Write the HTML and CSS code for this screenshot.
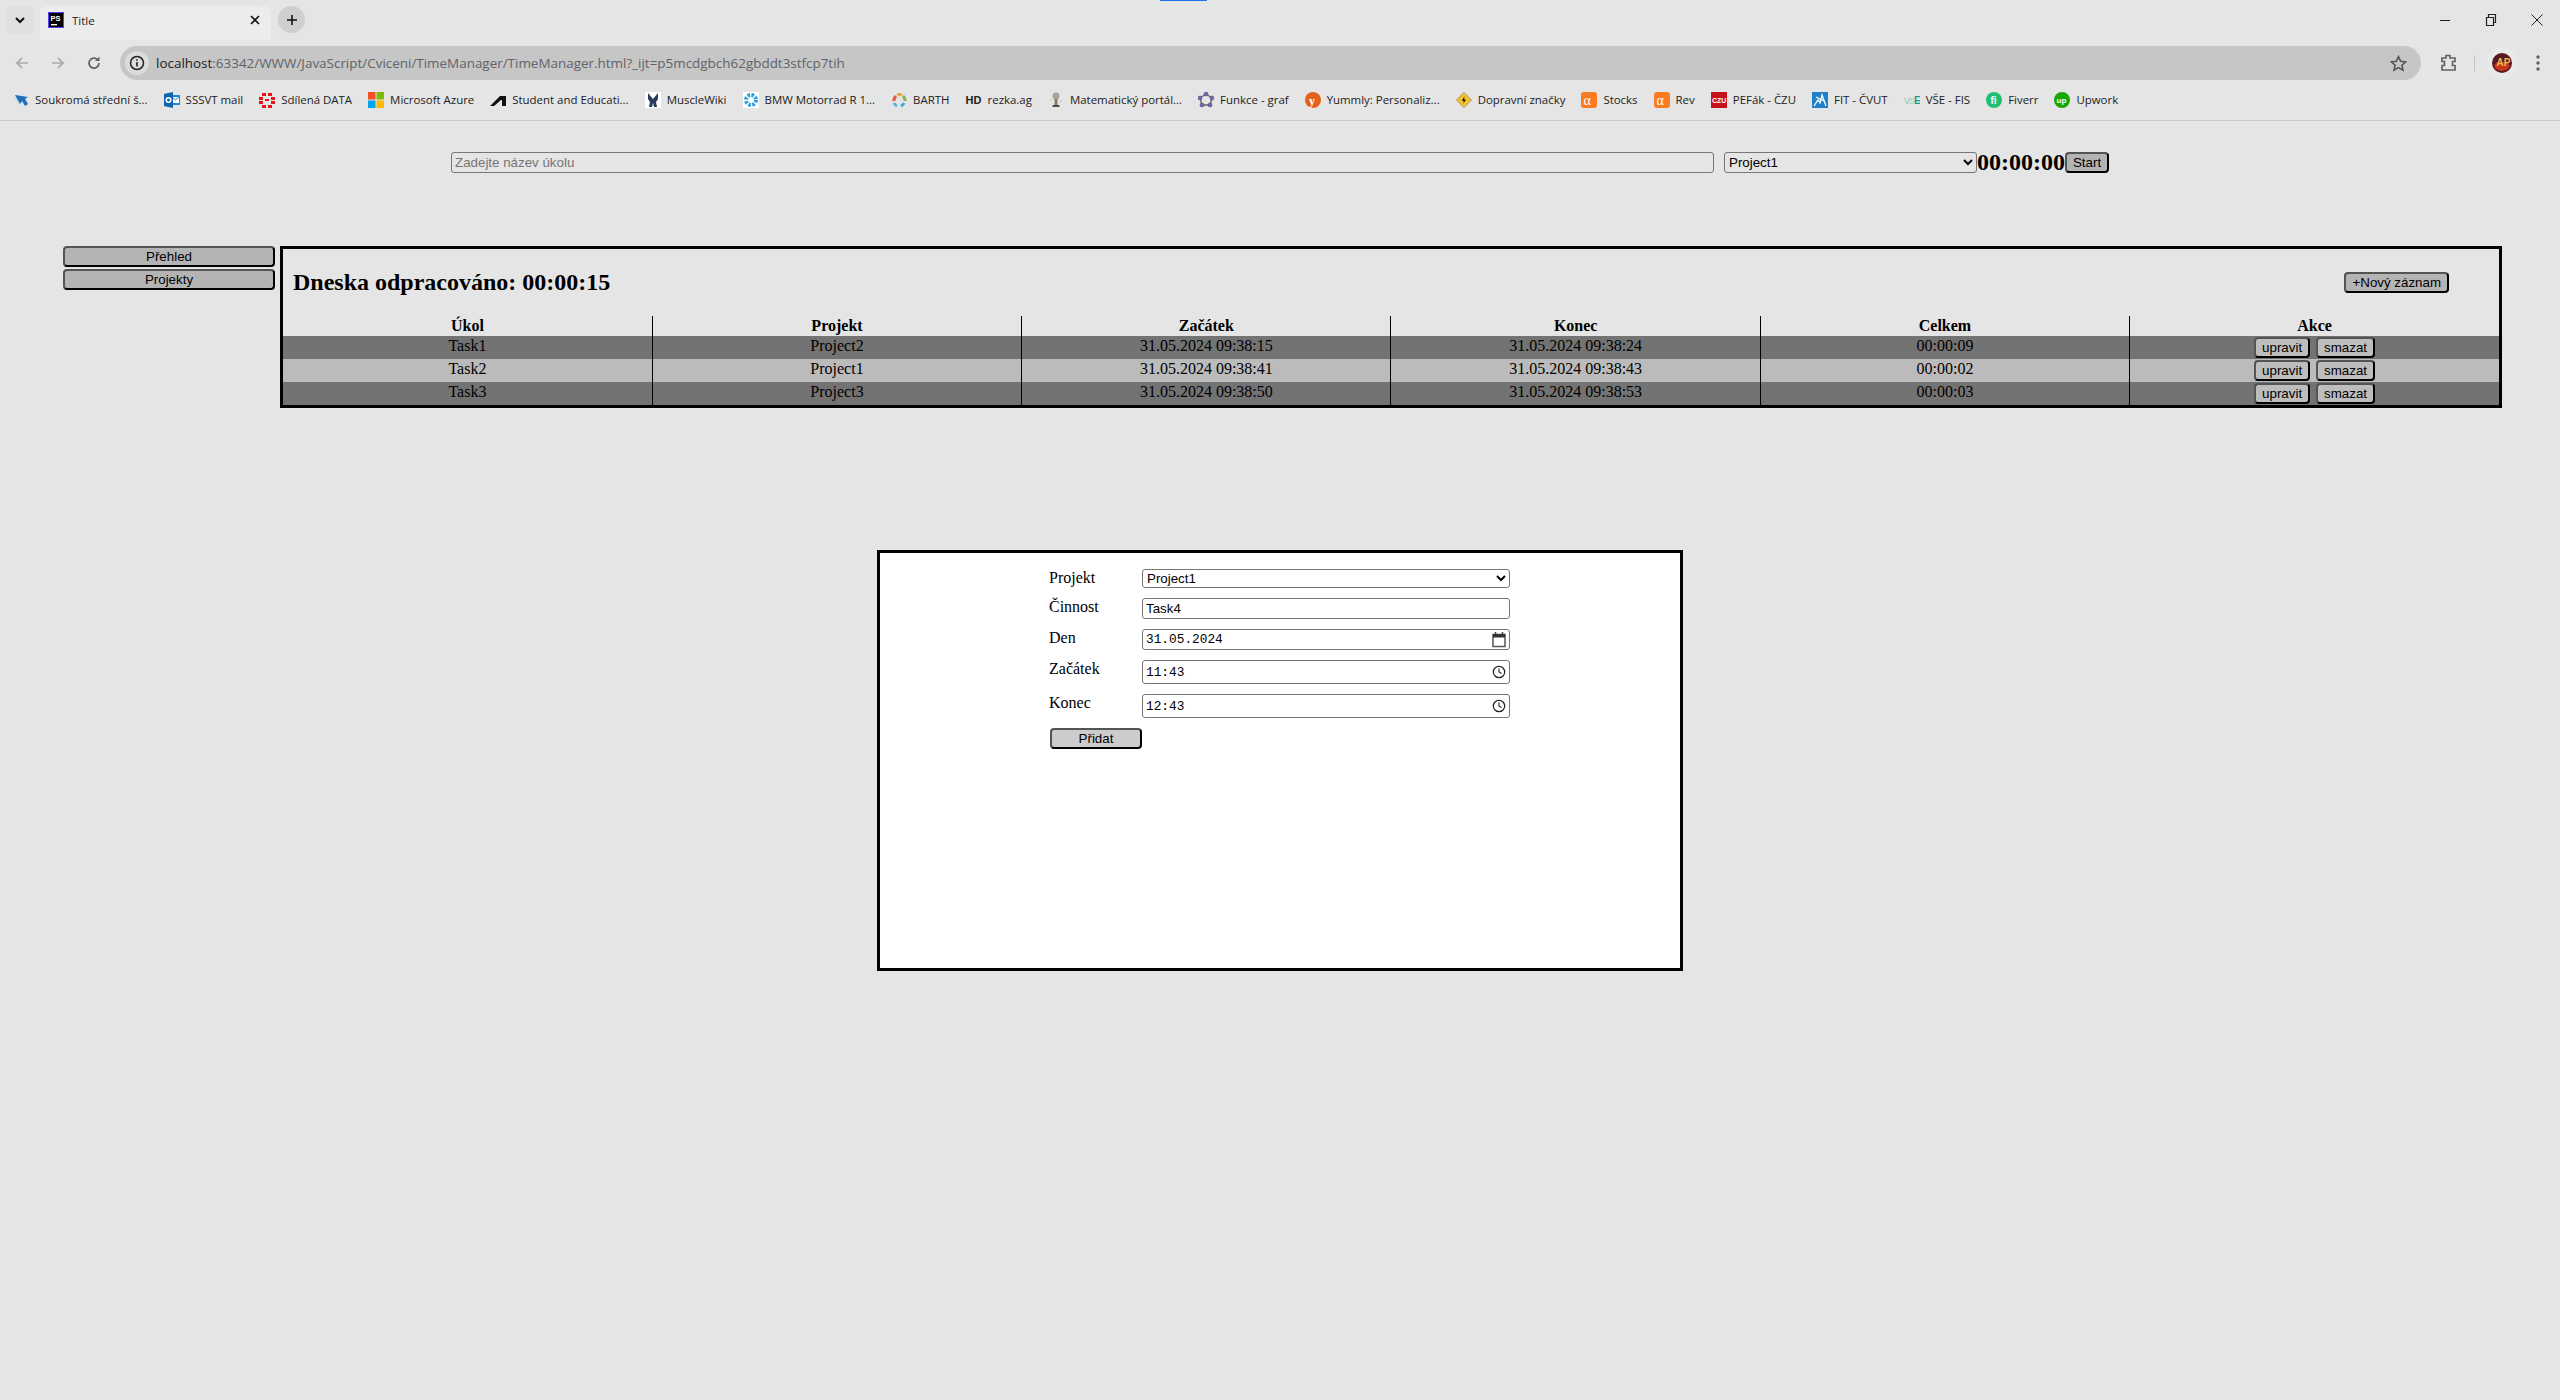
FILE: index.html
```html
<!DOCTYPE html>
<html>
<head>
<meta charset="utf-8">
<title>Title</title>
<link rel="stylesheet" href="styles.css">
</head>
<body>

<div class="browser">
    <div class="loadBar"></div>
    <div class="tabStrip">
        <div class="tabSearch">
            <svg width="12" height="12" viewBox="0 0 12 12"><path d="M2 4l4 4 4-4" fill="none" stroke="#111" stroke-width="2"/></svg>
        </div>
        <div class="tab">
            <svg class="fav" viewBox="0 0 16 16"><rect x=".5" y=".5" width="15" height="15" fill="#000" stroke="#5a3df0"/><text x="2.5" y="8.5" font-size="7.5" font-weight="700" fill="#fff" font-family="Liberation Sans">PS</text><rect x="3" y="12" width="6" height="1.4" fill="#fff"/></svg>
            <span class="tabTitle">Title</span>
            <svg class="tabClose" width="10" height="10" viewBox="0 0 10 10"><path d="M1 1l8 8M9 1l-8 8" stroke="#111" stroke-width="1.6"/></svg>
        </div>
        <div class="newTab">
            <svg width="12" height="12" viewBox="0 0 12 12"><path d="M6 1v10M1 6h10" stroke="#111" stroke-width="1.6"/></svg>
        </div>
        <div class="winControls">
            <svg width="12" height="12" viewBox="0 0 12 12"><path d="M1 6.500h10" stroke="#222" stroke-width="1"/></svg>
            <svg width="12" height="14" viewBox="0 0 12 14"><path d="M1.500 4.500h7v8h-7zM3.500 4.500v-3h7v8h-2" fill="none" stroke="#222" stroke-width="1.200"/></svg>
            <svg width="12" height="12" viewBox="0 0 12 12"><path d="M.5.5l11 11M11.500.5l-11 11" stroke="#222" stroke-width="1"/></svg>
        </div>
    </div>

    <div class="toolbar">
        <div class="navIcons">
            <svg width="16" height="16" viewBox="0 0 16 16"><path d="M14 8H3M8 3L3 8l5 5" fill="none" stroke="#a8a8a8" stroke-width="1.700"/></svg>
            <svg width="16" height="16" viewBox="0 0 16 16"><path d="M2 8h11M8 3l5 5-5 5" fill="none" stroke="#a8a8a8" stroke-width="1.700"/></svg>
            <svg width="16" height="16" viewBox="0 0 16 16"><path d="M13 8a5 5 0 1 1-1.500-3.500" fill="none" stroke="#5f6368" stroke-width="1.700"/><path d="M13.500 1.500v4.500h-4.500z" fill="#5f6368"/></svg>
        </div>
        <div class="omnibox">
            <div class="siteInfo">
                <svg width="16" height="16" viewBox="0 0 16 16"><circle cx="8" cy="8" r="6.500" fill="none" stroke="#222" stroke-width="1.500"/><path d="M8 7v4.500M8 4.200v1.500" stroke="#222" stroke-width="1.600"/></svg>
            </div>
            <div class="url"><span class="urlHost">localhost</span>:63342/WWW/JavaScript/Cviceni/TimeManager/TimeManager.html?_ijt=p5mcdgbch62gbddt3stfcp7tih</div>
            <svg class="star" width="17" height="17" viewBox="0 0 16 16"><path d="M8 1.500l2 4.400 4.800.5-3.600 3.200 1 4.700L8 11.900l-4.200 2.400 1-4.700L1.200 6.400 6 5.900z" fill="none" stroke="#555" stroke-width="1.500"/></svg>
        </div>
        <div class="toolIcons">
            <svg width="18" height="20" viewBox="0 0 18 20"><path d="M2 5h4V2.500h4V5h5v3.500h-2.500v4H15V17H2v-4.500h2.500v-4H2z" fill="none" stroke="#5f6368" stroke-width="1.700"/></svg>
            <div class="toolDivider"></div>
            <div class="avatarChip">
                <svg width="20" height="20" viewBox="0 0 20 20"><circle cx="10" cy="10" r="10" fill="#5a1a24"/><path d="M2 13a9 9 0 0 0 16 0l-3-4H5z" fill="#c8361d"/><text x="4.500" y="13" font-size="10" font-weight="700" fill="#f2b84a" font-family="Liberation Sans">AP</text></svg>
            </div>
            <svg width="4" height="16" viewBox="0 0 4 16"><circle cx="2" cy="2" r="1.700" fill="#5f6368"/><circle cx="2" cy="8" r="1.700" fill="#5f6368"/><circle cx="2" cy="14" r="1.700" fill="#5f6368"/></svg>
        </div>
    </div>

    <div class="bookmarks">
        <div class="mark"><svg class="fav" viewBox="0 0 16 16"><path d="M2 3l13 2-3 2 3 5-3 2-3-5-2 3z" fill="#1c6fb8"/><path d="M1 3l5 8-1 1z" fill="#bcd6ea"/></svg>Soukromá střední š...</div>
        <div class="mark"><svg class="fav" viewBox="0 0 16 16"><rect x="6" y="3" width="10" height="10" fill="#1b8ad6"/><rect x="8" y="5" width="7" height="6" fill="#fff"/><path d="M8 5l3.500 3L15 5" fill="none" stroke="#1b8ad6"/><path d="M0 2l9-2v16l-9-2z" fill="#0f64b0"/><circle cx="4.500" cy="8" r="2.300" fill="none" stroke="#fff" stroke-width="1.500"/></svg>SSSVT mail</div>
        <div class="mark"><svg class="fav" viewBox="0 0 16 16" fill="#e3141e"><rect x="3" y="1" width="4" height="3"/><rect x="9" y="1" width="4" height="3"/><rect x="0" y="5" width="4" height="3"/><rect x="12" y="5" width="4" height="3"/><rect x="0" y="9" width="4" height="3"/><rect x="12" y="9" width="4" height="3"/><rect x="3" y="13" width="4" height="3"/><rect x="9" y="13" width="4" height="3"/><rect x="6" y="7" width="4" height="2"/></svg>Sdílená DATA</div>
        <div class="mark"><svg class="fav" viewBox="0 0 16 16"><rect width="7.500" height="7.500" fill="#f25022"/><rect x="8.500" width="7.500" height="7.500" fill="#7fba00"/><rect y="8.500" width="7.500" height="7.500" fill="#00a4ef"/><rect x="8.500" y="8.500" width="7.500" height="7.500" fill="#ffb900"/></svg>Microsoft Azure</div>
        <div class="mark"><svg class="fav" viewBox="0 0 16 16"><path d="M0 14L10 4h6v10h-4V8h-1L4 14z" fill="#111"/></svg>Student and Educati...</div>
        <div class="mark"><svg class="fav" viewBox="0 0 16 16"><rect width="16" height="16" fill="#fff"/><path d="M3 1l5 6 5-6v6l-2 3 1 5H9L8 11l-1 4H4l1-5-2-3z" fill="#2b3a5e"/></svg>MuscleWiki</div>
        <div class="mark"><svg class="fav" viewBox="0 0 16 16"><rect width="16" height="16" fill="#fff"/><circle cx="8" cy="8" r="5" fill="none" stroke="#2a9fdc" stroke-width="4" stroke-dasharray="2.500 1.400"/></svg>BMW Motorrad R 1...</div>
        <div class="mark"><svg class="fav" viewBox="0 0 16 16" fill="none" stroke-width="3"><path d="M3 9a6 6 0 0 1 2-5" stroke="#e8553a"/><path d="M6 3a6 6 0 0 1 5 0" stroke="#f0a03c"/><path d="M12 4a6 6 0 0 1 2 5" stroke="#7cb64a"/><path d="M13 11a6 6 0 0 1-3 3" stroke="#3ea8d8"/><path d="M6 14a6 6 0 0 1-3-3" stroke="#5bb8dc"/></svg>BARTH</div>
        <div class="mark"><span class="hdIcon">HD</span>rezka.ag</div>
        <div class="mark"><svg class="fav" viewBox="0 0 16 16"><circle cx="8" cy="4" r="3.500" fill="#a8a398"/><rect x="6.500" y="7" width="3" height="6" fill="#8a7a66"/><rect x="4.500" y="13" width="7" height="2" fill="#5a4a3a"/><circle cx="3" cy="8" r="1" fill="#d8c8b0"/><circle cx="13" cy="9" r="1" fill="#d8b8a0"/></svg>Matematický portál...</div>
        <div class="mark"><svg class="fav" viewBox="0 0 16 16"><path d="M8 2l6 4-2 7H4L2 6z" fill="none" stroke="#666" stroke-width="1.400"/><g fill="#6f68c8" stroke="#444" stroke-width=".5"><circle cx="8" cy="2" r="2"/><circle cx="14" cy="6" r="2"/><circle cx="12" cy="13" r="2"/><circle cx="4" cy="13" r="2"/><circle cx="2" cy="6" r="2"/></g></svg>Funkce - graf</div>
        <div class="mark"><svg class="fav" viewBox="0 0 16 16"><circle cx="8" cy="8" r="8" fill="#e2621b"/><text x="4" y="12.500" font-size="12" font-weight="700" fill="#fff" font-family="Liberation Serif">y</text></svg>Yummly: Personaliz...</div>
        <div class="mark"><svg class="fav" viewBox="0 0 16 16"><path d="M8 .5L15.500 8 8 15.500.5 8z" fill="#f2c230" stroke="#8a7020" stroke-width=".6"/><path d="M8.500 4L6 9h2l-1 3 3-4.500H8z" fill="#111"/></svg>Dopravní značky</div>
        <div class="mark"><svg class="fav" viewBox="0 0 16 16"><rect width="16" height="16" rx="3" fill="#f97b22"/><text x="2.500" y="13" font-size="14" fill="#fff" font-family="Liberation Serif">α</text></svg>Stocks</div>
        <div class="mark"><svg class="fav" viewBox="0 0 16 16"><rect width="16" height="16" rx="3" fill="#f97b22"/><text x="2.500" y="13" font-size="14" fill="#fff" font-family="Liberation Serif">α</text></svg>Rev</div>
        <div class="mark"><svg class="fav" viewBox="0 0 16 16"><rect width="16" height="16" fill="#c8101a"/><text x="1" y="11" font-size="7" font-weight="700" fill="#fff" font-family="Liberation Sans">CZU</text></svg>PEFák - ČZU</div>
        <div class="mark"><svg class="fav" viewBox="0 0 16 16"><rect width="16" height="16" fill="#1f7fc8"/><path d="M2 14l4-6 2 3 2-8 4 11M4 5l8 4" fill="none" stroke="#fff" stroke-width="1.300"/></svg>FIT - ČVUT</div>
        <div class="mark"><svg class="fav" viewBox="0 0 16 16"><text x="0" y="12" font-size="9" fill="#7fc4b4" font-family="Liberation Sans">V</text><text x="5" y="12" font-size="9" fill="#9fd0c4" font-family="Liberation Sans">S</text><text x="10" y="12" font-size="10" font-weight="700" fill="#17a085" font-family="Liberation Sans">E</text></svg>VŠE - FIS</div>
        <div class="mark"><svg class="fav" viewBox="0 0 16 16"><circle cx="8" cy="8" r="8" fill="#1dbf73"/><text x="4.500" y="12" font-size="10" font-weight="700" fill="#fff" font-family="Liberation Sans">fi</text></svg>Fiverr</div>
        <div class="mark"><svg class="fav" viewBox="0 0 16 16"><circle cx="8" cy="8" r="8" fill="#14a800"/><text x="2.500" y="11" font-size="8" font-weight="700" fill="#fff" font-family="Liberation Sans">up</text></svg>Upwork</div>
    </div>
</div>

<div class="tracker">
    <input class="taskName" type="text" placeholder="Zadejte název úkolu">
    <select class="projectPick">
        <option>Project1</option>
        <option>Project2</option>
        <option>Project3</option>
    </select>
    <span class="timer">00:00:00</span>
    <button class="btn">Start</button>
</div>

<div class="content">
    <div class="sidebar">
        <button class="btn sideBtn">Přehled</button>
        <button class="btn sideBtn">Projekty</button>
    </div>
    <div class="mainBox">
        <div class="mainHead">
            <h2 class="todayTitle">Dneska odpracováno: 00:00:15</h2>
            <button class="btn">+Nový záznam</button>
        </div>
        <table class="entries">
            <tr>
                <th>Úkol</th><th>Projekt</th><th>Začátek</th><th>Konec</th><th>Celkem</th><th>Akce</th>
            </tr>
            <tr class="rowDark">
                <td>Task1</td><td>Project2</td><td>31.05.2024 09:38:15</td><td>31.05.2024 09:38:24</td><td>00:00:09</td>
                <td class="actions"><button class="btn rowBtn">upravit</button><button class="btn rowBtn">smazat</button></td>
            </tr>
            <tr class="rowLight">
                <td>Task2</td><td>Project1</td><td>31.05.2024 09:38:41</td><td>31.05.2024 09:38:43</td><td>00:00:02</td>
                <td class="actions"><button class="btn rowBtn">upravit</button><button class="btn rowBtn">smazat</button></td>
            </tr>
            <tr class="rowDark">
                <td>Task3</td><td>Project3</td><td>31.05.2024 09:38:50</td><td>31.05.2024 09:38:53</td><td>00:00:03</td>
                <td class="actions"><button class="btn rowBtn">upravit</button><button class="btn rowBtn">smazat</button></td>
            </tr>
        </table>
    </div>
</div>

<div class="formBox">
    <form class="entryForm">
        <label>Projekt</label>
        <select class="field selectField">
            <option>Project1</option>
            <option>Project2</option>
            <option>Project3</option>
        </select>
        <label>Činnost</label>
        <input class="field" type="text" value="Task4">
        <label>Den</label>
        <div class="field fakeField">
            <span>31.05.2024</span>
            <svg width="14" height="16" viewBox="0 0 14 16"><path d="M3.500 0v3M10.500 0v3" stroke="#444" stroke-width="1.500"/><rect x="1" y="2.500" width="12" height="12" fill="none" stroke="#555" stroke-width="1.500"/><rect x="1" y="2" width="12" height="3.500" fill="#333"/></svg>
        </div>
        <label>Začátek</label>
        <div class="field fakeField tallField">
            <span>11:43</span>
            <svg width="14" height="14" viewBox="0 0 14 14"><circle cx="7" cy="7" r="5.700" fill="none" stroke="#222" stroke-width="1.200"/><path d="M7 3.500V7l2.500 1.500" fill="none" stroke="#222" stroke-width="1.100"/></svg>
        </div>
        <label>Konec</label>
        <div class="field fakeField tallField">
            <span>12:43</span>
            <svg width="14" height="14" viewBox="0 0 14 14"><circle cx="7" cy="7" r="5.700" fill="none" stroke="#222" stroke-width="1.200"/><path d="M7 3.500V7l2.500 1.500" fill="none" stroke="#222" stroke-width="1.100"/></svg>
        </div>
        <button class="btn addBtn" type="button">Přidat</button>
    </form>
</div>

</body>
</html>
```

FILE: styles.css
```css
html, body{
    margin: 0;
    height: 100%;
}
body{
    background-color: #e5e5e5;
    font-family: "Liberation Serif", serif;
    font-size: 16px;
    color: #000;
}

/* browser window */
.browser{
    position: relative;
    height: 121px;
    box-sizing: border-box;
    border-bottom: 1px solid #c8c8c8;
    font-family: "Open Sans", sans-serif;
    font-size: 11.45px;
    color: #222;
}
.loadBar{
    position: absolute;
    left: 1160px;
    top: 0;
    width: 47px;
    height: 1px;
    background-color: #1a73e8;
}
.tabStrip{
    display: flex;
    align-items: flex-end;
    height: 40px;
    padding-left: 6px;
}
.tabSearch{
    display: flex;
    align-items: center;
    justify-content: center;
    width: 28px;
    height: 28px;
    margin-bottom: 6px;
    border-radius: 8px;
    background-color: #e0e0e0;
}
.tab{
    display: flex;
    align-items: center;
    width: 231px;
    height: 34px;
    margin-left: 6px;
    padding: 0 11px 6px 8px;
    box-sizing: border-box;
    border-radius: 8px 8px 0 0;
    background-color: #ececec;
}
.tabTitle{
    flex: 1;
    margin-left: 8px;
}
.fav{
    width: 16px;
    height: 16px;
    flex: none;
}
.newTab{
    display: flex;
    align-items: center;
    justify-content: center;
    width: 27px;
    height: 27px;
    margin: 0 0 7px 7px;
    border-radius: 50%;
    background-color: #cfcfcf;
}
.winControls{
    display: flex;
    align-items: center;
    gap: 34px;
    height: 40px;
    margin-left: auto;
    padding-right: 17px;
}
.toolbar{
    display: flex;
    align-items: center;
    height: 40px;
    padding-top: 6px;
    box-sizing: border-box;
}
.navIcons{
    display: flex;
    gap: 20px;
    width: 120px;
    padding-left: 14px;
    box-sizing: border-box;
}
.omnibox{
    display: flex;
    align-items: center;
    width: 2301px;
    height: 34px;
    border-radius: 17px;
    background-color: #c6c6c6;
}
.siteInfo{
    display: flex;
    align-items: center;
    justify-content: center;
    width: 24px;
    height: 24px;
    margin-left: 5px;
    border-radius: 50%;
    background-color: #dcdcdc;
}
.url{
    flex: 1;
    margin-left: 7px;
    font-size: 13.45px;
    color: #5f6368;
}
.urlHost{
    color: #202124;
}
.star{
    margin-right: 14px;
}
.toolIcons{
    display: flex;
    align-items: center;
    padding-left: 19px;
}
.toolDivider{
    width: 1px;
    height: 16px;
    margin: 0 12px 0 16px;
    background-color: #c4c4c4;
}
.avatarChip{
    display: flex;
    align-items: center;
    justify-content: center;
    width: 30px;
    height: 32px;
    margin-right: 19px;
    border-radius: 15px;
    background-color: #e9e9e9;
}
.bookmarks{
    display: flex;
    align-items: center;
    height: 40px;
    padding: 0 0 1px 5px;
    box-sizing: border-box;
}
.mark{
    display: flex;
    align-items: center;
    gap: 6px;
    padding: 0 8px;
    white-space: nowrap;
}
.hdIcon{
    width: 16px;
    font-family: "Liberation Sans", sans-serif;
    font-weight: bold;
    font-size: 11px;
}

/* timer row */
.tracker{
    display: flex;
    align-items: center;
    height: 21px;
    margin-top: 31px;
    padding-left: 451px;
}
.taskName{
    width: 1263px;
    height: 21px;
    margin-right: 10px;
    padding: 1px 3px;
    box-sizing: border-box;
    border: 1px solid #767676;
    border-radius: 3px;
    background-color: transparent;
    font-family: "Liberation Sans", sans-serif;
    font-size: 13.33px;
}
.projectPick{
    width: 253px;
    height: 21px;
    box-sizing: border-box;
    border: 1px solid #767676;
    border-radius: 3px;
    background-color: transparent;
    font-family: "Liberation Sans", sans-serif;
    font-size: 13.33px;
}
.timer{
    font-weight: bold;
    font-size: 24px;
}
.btn{
    height: 21px;
    padding: 0 6px;
    box-sizing: border-box;
    border: 2px outset #000;
    border-radius: 4px;
    background-color: #b4b4b4;
    color: #000;
    font-family: "Liberation Sans", sans-serif;
    font-size: 13.33px;
    line-height: 15px;
}

/* overview */
.content{
    display: flex;
    margin-top: 73px;
    padding-left: 63px;
}
.sidebar{
    display: flex;
    flex-direction: column;
    gap: 2px;
    width: 212px;
    margin-right: 5px;
}
.sideBtn{
    width: 100%;
}
.mainBox{
    width: 2222px;
    box-sizing: border-box;
    border: 3px solid #000;
}
.mainHead{
    display: flex;
    align-items: center;
    justify-content: space-between;
    height: 67px;
    padding: 0 50px 0 10px;
}
.todayTitle{
    margin: 0;
    font-size: 24px;
    font-weight: bold;
}
.entries{
    width: 100%;
    table-layout: fixed;
    border-collapse: collapse;
}
.entries th{
    height: 20px;
    padding: 0;
    border-right: 1px solid #000;
    font-size: 16px;
    line-height: 20px;
}
.entries td{
    height: 23px;
    padding: 0;
    border-right: 1px solid #000;
    box-sizing: border-box;
    text-align: center;
    vertical-align: top;
    line-height: 20px;
}
.entries th:last-child, .entries td:last-child{
    border-right: none;
}
.rowDark{
    background-color: #737373;
}
.rowLight{
    background-color: #bbbbbb;
}
.entries td.actions{
    padding-top: 1px;
}
.rowBtn{
    margin: 0 3px;
    background-color: #bdbdbd;
    vertical-align: top;
}

/* add form */
.formBox{
    width: 806px;
    height: 421px;
    margin: 142px 0 0 877px;
    padding-top: 16px;
    box-sizing: border-box;
    border: 3px solid #000;
    background-color: #fff;
}
.entryForm{
    display: grid;
    grid-template-columns: 93px 368px;
    row-gap: 10px;
    width: 461px;
    margin-left: 169px;
}
.entryForm label{
    line-height: 18px;
}
.field{
    height: 21px;
    padding: 1px 3px;
    box-sizing: border-box;
    border: 1px solid #767676;
    border-radius: 3px;
    background-color: #fff;
    font-family: "Liberation Sans", sans-serif;
    font-size: 13.33px;
}
.selectField{
    height: 19px;
    padding: 0;
}
.fakeField{
    display: flex;
    align-items: center;
    justify-content: space-between;
    font-family: "Liberation Mono", monospace;
    font-size: 12.8px;
}
.tallField{
    height: 24px;
}
.addBtn{
    width: 92px;
    margin-left: 1px;
    background-color: #cccccc;
}
```
